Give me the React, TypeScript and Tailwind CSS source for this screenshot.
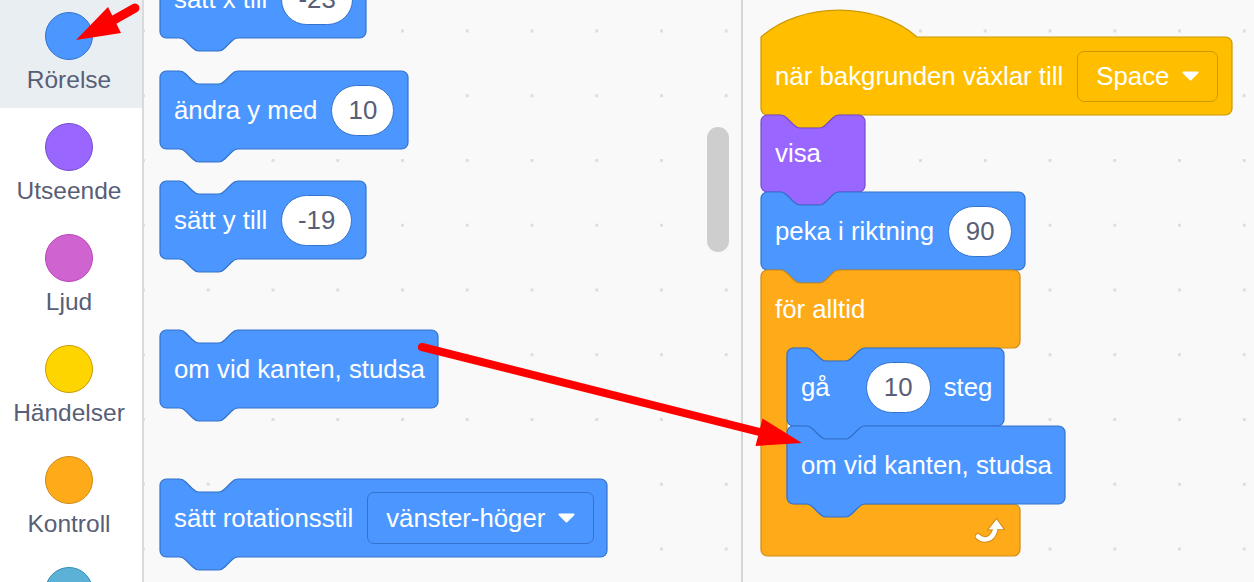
import type { ReactNode } from "react";

const S = 1.625;

const NOTCH_R =
  "c 2,0 3,1 4,2 l 4,4 c 1,1 2,2 4,2 h 12 c 2,0 3,-1 4,-2 l 4,-4 c 1,-1 2,-2 4,-2";
const NOTCH_L =
  "c -2,0 -3,1 -4,2 l -4,4 c -1,1 -2,2 -4,2 h -12 c -2,0 -3,-1 -4,-2 l -4,-4 c -1,-1 -2,-2 -4,-2";

function stackPath(W: number, H: number) {
  return `M 0,4 A 4,4 0 0 1 4,0 H 12 ${NOTCH_R} H ${W - 4} a 4,4 0 0 1 4,4 V ${H - 4} a 4,4 0 0 1 -4,4 H 48 ${NOTCH_L} H 4 a 4,4 0 0 1 -4,-4 Z`;
}

function hatPath(W: number, H: number) {
  return `M 0,0 c 25,-22 71,-22 96,0 H ${W - 4} a 4,4 0 0 1 4,4 V ${H - 4} a 4,4 0 0 1 -4,4 H 48 ${NOTCH_L} H 4 a 4,4 0 0 1 -4,-4 Z`;
}

function cPath(W: number, H1: number, Hi: number, Hb: number) {
  const y2 = H1 + Hi;
  const y3 = y2 + Hb;
  return `M 0,4 A 4,4 0 0 1 4,0 H 12 ${NOTCH_R} H ${W - 4} a 4,4 0 0 1 4,4 V ${H1 - 4} a 4,4 0 0 1 -4,4 H 64 ${NOTCH_L} H 20 a 4,4 0 0 0 -4,4 V ${y2 - 4} a 4,4 0 0 0 4,4 H ${W - 4} a 4,4 0 0 1 4,4 V ${y3 - 4} a 4,4 0 0 1 -4,4 H 4 a 4,4 0 0 1 -4,-4 Z`;
}

const COLORS = {
  motion: { fill: "#4c97ff", stroke: "#3373cc" },
  looks: { fill: "#9966ff", stroke: "#774dcb" },
  events: { fill: "#ffbf00", stroke: "#cc9900" },
  control: { fill: "#ffab19", stroke: "#cf8b17" },
};

type Kind = keyof typeof COLORS;

function Block({
  w,
  h = 78,
  kind = "motion",
  hat = false,
  className = "",
  gap = "gap-[14px]",
  children,
}: {
  w: number;
  h?: number;
  kind?: Kind;
  hat?: boolean;
  className?: string;
  gap?: string;
  children: ReactNode;
}) {
  const W = w / S;
  const H = h / S;
  const c = COLORS[kind];
  return (
    <div className={`relative shrink-0 ${className}`} style={{ width: w, height: h }}>
      <svg
        className="absolute left-0 top-0 overflow-visible"
        width={w}
        height={h}
        viewBox={`0 0 ${W} ${H}`}
      >
        <path d={hat ? hatPath(W, H) : stackPath(W, H)} fill={c.fill} stroke={c.stroke} strokeWidth={0.75} />
      </svg>
      <div className={`relative flex h-full items-center whitespace-nowrap pl-[14px] text-[25.8px] text-white ${gap}`}>
        {children}
      </div>
    </div>
  );
}

function Num({ value, w, className = "" }: { value: string; w: number; className?: string }) {
  return (
    <div
      className={`flex h-[51px] shrink-0 items-center justify-center rounded-full border border-[#3373cc] bg-white text-[25.8px] text-[#575e75] ${className}`}
      style={{ width: w }}
    >
      {value}
    </div>
  );
}

function Caret() {
  return (
    <svg width="17" height="10" viewBox="0 0 17 10">
      <path d="M1.5 1.5 H15.5 L8.5 8.5 Z" fill="white" stroke="white" strokeWidth="2" strokeLinejoin="round" />
    </svg>
  );
}

function Dropdown({ label, w, h, border }: { label: string; w: number; h: number; border: string }) {
  return (
    <div
      className={`flex shrink-0 items-center gap-[13px] rounded-[7px] border pl-[18px] text-[25.8px] text-white ${border}`}
      style={{ width: w, height: h }}
    >
      <span>{label}</span>
      <Caret />
    </div>
  );
}

function LoopIcon() {
  const d = "M3 19.5 C 8.5 24.5, 17 23.5, 20 13.5";
  return (
    <svg width="31" height="26" viewBox="0 0 31 26">
      <path d={d} fill="none" stroke="#cf8b17" strokeWidth="6.5" strokeLinecap="round" />
      <path d="M12.5 13 L21.5 1.5 L29.5 12.5 Z" fill="white" stroke="#cf8b17" strokeWidth="1.2" strokeLinejoin="round" />
      <path d={d} fill="none" stroke="white" strokeWidth="4.5" strokeLinecap="round" />
    </svg>
  );
}

function Forever({ w, children }: { w: number; children: ReactNode }) {
  const W = w / S;
  const c = COLORS.control;
  return (
    <div className="relative shrink-0" style={{ width: w }}>
      <svg className="absolute left-0 top-0 overflow-visible" width={w} height={286} viewBox={`0 0 ${W} ${286 / S}`}>
        <path d={cPath(W, 78 / S, 156 / S, 52 / S)} fill={c.fill} stroke={c.stroke} strokeWidth={0.75} />
      </svg>
      <div className="relative flex h-[78px] items-center pl-[14px] text-[25.8px] text-white">för alltid</div>
      <div className="relative flex flex-col pl-[26px]">{children}</div>
      <div className="relative flex h-[52px] items-end justify-end pb-[13px] pr-[14px]">
        <LoopIcon />
      </div>
    </div>
  );
}

const categories = [
  { name: "Rörelse", fill: "bg-[#4c97ff]", border: "border-[#3373cc]", active: true },
  { name: "Utseende", fill: "bg-[#9966ff]", border: "border-[#774dcb]" },
  { name: "Ljud", fill: "bg-[#cf63cf]", border: "border-[#bd42bd]" },
  { name: "Händelser", fill: "bg-[#ffd500]", border: "border-[#cc9900]" },
  { name: "Kontroll", fill: "bg-[#ffab19]", border: "border-[#cf8b17]" },
  { name: "", fill: "bg-[#5cb1d6]", border: "border-[#2e8eb8]" },
];

export default function App() {
  return (
    <div className="relative flex h-[582px] w-[1254px] overflow-hidden bg-white [font-family:'Liberation_Sans',Arial,sans-serif]">
      {/* categories */}
      <div className="w-[144px] shrink-0 border-r-2 border-[#dadada] bg-white">
        <div className="-mt-[3px] flex flex-col">
          {categories.map((c, i) => (
            <div
              key={i}
              className={`flex h-[111px] shrink-0 flex-col items-center pr-[4px] pt-[15px] ${c.active ? "bg-[#e9eef2]" : ""}`}
            >
              <div className={`h-12 w-12 rounded-full border ${c.fill} ${c.border}`} />
              {c.name && (
                <div className="mt-[6px] text-[24.5px] leading-[28px] text-[#575e75]">{c.name}</div>
              )}
            </div>
          ))}
        </div>
      </div>

      {/* palette + workspace share the dotted canvas */}
      <div className="flex flex-1 bg-[#f9f9f9] bg-[radial-gradient(circle,#dcdcdc_1.3px,transparent_1.9px)] [background-position:-32.9px_-1.4px] [background-size:64.75px_64.75px]">
        <div className="relative w-[599px] shrink-0 border-r-2 border-[#d6d6d6] pl-[16px]">
          <div className="flex flex-col items-start">
            <Block w={206} className="-mt-[40px]">
              <span>sätt x till</span>
              <Num value="-23" w={72} />
            </Block>
            <Block w={248} className="mt-[33px]">
              <span>ändra y med</span>
              <Num value="10" w={63} />
            </Block>
            <Block w={206} className="mt-[32px]">
              <span>sätt y till</span>
              <Num value="-19" w={71} />
            </Block>
            <Block w={278} className="mt-[71px]">
              <span>om vid kanten, studsa</span>
            </Block>
            <Block w={447} className="mt-[71px]">
              <span>sätt rotationsstil</span>
              <Dropdown label="vänster-höger" w={227} h={52} border="border-[#3373cc] bg-[#4c97ff]" />
            </Block>
          </div>
          <div className="absolute right-[12px] top-[127px] h-[125px] w-[22px] rounded-full bg-[#cecece]" />
        </div>

        <div className="flex-1 pl-[18px] pt-[37px]">
          <div className="flex flex-col items-start">
            <Block w={471} kind="events" hat>
              <span>när bakgrunden växlar till</span>
              <Dropdown label="Space" w={141} h={51} border="border-[#cc9900] bg-[#ffbf00]" />
            </Block>
            <Block w={104} h={77} kind="looks">
              <span>visa</span>
            </Block>
            <Block w={264}>
              <span>peka i riktning</span>
              <Num value="90" w={64} />
            </Block>
            <Forever w={259}>
              <Block w={217} gap="gap-0">
                <span>gå</span>
                <Num value="10" w={65} className="ml-[36px]" />
                <span className="ml-[13px]">steg</span>
              </Block>
              <Block w={278}>
                <span>om vid kanten, studsa</span>
              </Block>
            </Forever>
          </div>
        </div>
      </div>

      {/* red annotation arrows */}
      <svg className="pointer-events-none absolute left-0 top-0" width="1254" height="582" viewBox="0 0 1254 582">
        <line x1="135" y1="8" x2="112" y2="21" stroke="#ff0000" strokeWidth="9" strokeLinecap="round" />
        <polygon points="76,40 108,7 121,33" fill="#ff0000" />
        <line x1="422" y1="347" x2="765" y2="433.5" stroke="#ff0000" strokeWidth="8" strokeLinecap="round" />
        <polygon points="802,443 762.5,418.5 755.5,446" fill="#ff0000" />
      </svg>
    </div>
  );
}
